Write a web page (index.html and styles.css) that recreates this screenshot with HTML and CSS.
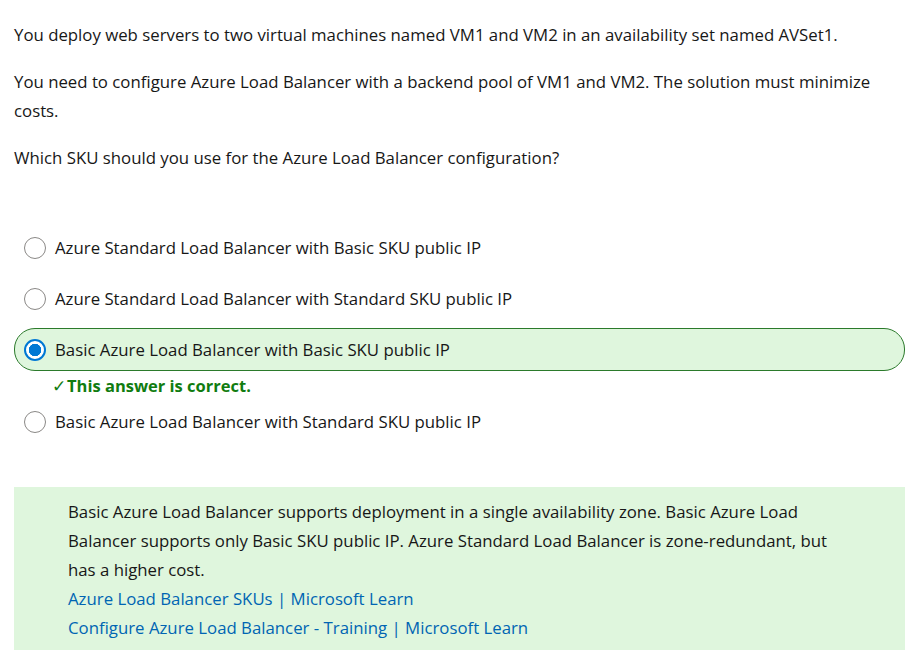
FILE: index.html
```html
<!DOCTYPE html>
<html>
<head>
<meta charset="utf-8">
<link rel="stylesheet" href="styles.css">
</head>
<body>
<div class="page">
  <p class="para">You deploy web servers to two virtual machines named VM1 and VM2 in an availability set named AVSet1.</p>
  <p class="para">You need to configure Azure Load Balancer with a backend pool of VM1 and VM2. The solution must minimize costs.</p>
  <p class="para">Which SKU should you use for the Azure Load Balancer configuration?</p>

  <div class="options">
    <div class="option"><span class="radio"></span><span class="label">Azure Standard Load Balancer with Basic SKU public IP</span></div>
    <div class="option"><span class="radio"></span><span class="label">Azure Standard Load Balancer with Standard SKU public IP</span></div>
    <div class="option option-selected"><span class="radio radio-on"></span><span class="label">Basic Azure Load Balancer with Basic SKU public IP</span></div>
    <div class="feedback"><span class="check">&#10003;</span>This answer is correct.</div>
    <div class="option"><span class="radio"></span><span class="label">Basic Azure Load Balancer with Standard SKU public IP</span></div>
  </div>

  <div class="explain">
    <p class="explain-text">Basic Azure Load Balancer supports deployment in a single availability zone. Basic Azure Load Balancer supports only Basic SKU public IP. Azure Standard Load Balancer is zone-redundant, but has a higher cost.</p>
    <a class="link" href="#">Azure Load Balancer SKUs | Microsoft Learn</a>
    <a class="link" href="#">Configure Azure Load Balancer - Training | Microsoft Learn</a>
  </div>
</div>
</body>
</html>
```

FILE: styles.css
```css
html, body {
  margin: 0;
  padding: 0;
  background: #ffffff;
}
body {
  font-family: "Open Sans", "Noto Sans", sans-serif;
  font-size: 16.8px;
  color: #171717;
  line-height: 29px;
}
.page {
  padding: 20px 5px 0 14px;
}
.para {
  margin: 0 0 18px 0;
}
.options {
  margin-top: 54px;
  display: flex;
  flex-direction: column;
}
.option {
  display: flex;
  align-items: center;
  gap: 9px;
  height: 43px;
  padding-left: 9px;
  box-sizing: border-box;
  border: 1px solid transparent;
  border-radius: 21px;
  margin-bottom: 8px;
}
.option-selected {
  background: #dff6dd;
  border-color: #2b7a2b;
  margin-bottom: 0;
}
.radio {
  width: 22px;
  height: 22px;
  box-sizing: border-box;
  border: 1px solid #8a8886;
  border-radius: 50%;
  background: #fff;
  flex: none;
}
.radio-on {
  border: 2px solid #0078d4;
  background: radial-gradient(circle, #0078d4 0 6px, #ffffff 6.5px);
}
.feedback {
  color: #107c10;
  font-weight: 700;
  font-size: 16.5px;
  height: 29px;
  line-height: 29px;
  padding-left: 38px;
}
.check {
  font-weight: 400;
  margin-right: 1px;
}
.explain {
  margin-top: 36px;
  background: #dff6dd;
  padding: 10px 62px 8px 54px;
}
.explain-text {
  margin: 0;
}
.link {
  display: block;
  color: #0065b3;
  text-decoration: none;
}
```
